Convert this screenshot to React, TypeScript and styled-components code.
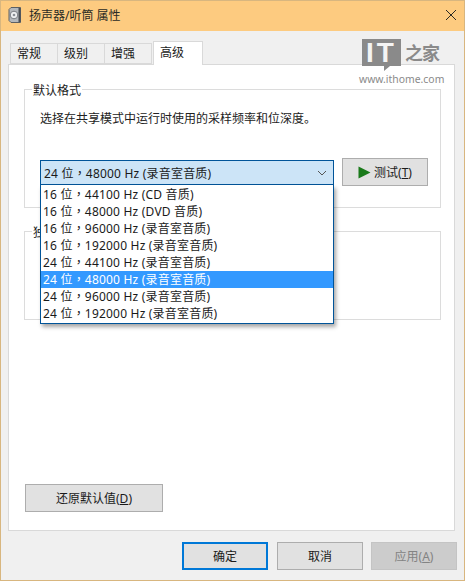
import React from "react";
import styled, { createGlobalStyle } from "styled-components";

const Global = createGlobalStyle`
  html, body { margin: 0; padding: 0; background: #f0f0f0; }
  * { box-sizing: border-box; }
`;

const Win = styled.div`
  position: relative;
  width: 465px;
  height: 581px;
  display: flex;
  flex-direction: column;
  background: #f0f0f0;
  border: 1px solid #d8b67f;
  border-top: 0;
  font-family: "Noto Sans", "Noto Sans CJK SC", sans-serif;
  font-size: 12px;
  color: #1a1a1a;
  overflow: hidden;
`;
const Title = styled.div`
  height: 31px;
  flex: none;
  background: #fdcb80;
  border-top: 1px solid #d8b67f;
  display: flex;
  align-items: center;
  padding: 0 7px 2px 7px;
  gap: 7px;
  font-size: 12px;
`;
const TitleText = styled.span`
  flex: 1;
  color: #2a2a24;
`;
const Body = styled.div`
  flex: 1;
  display: flex;
  flex-direction: column;
  padding: 10px 9px 0 7px;
  min-height: 0;
`;
const Tabs = styled.div`
  display: flex;
  height: 23px;
  flex: none;
  align-items: flex-end;
  padding-left: 3px;
`;
const Tab = styled.div<{ $active?: boolean }>`
  height: ${(p) => (p.$active ? 24 : 21)}px;
  width: ${(p) => (p.$active ? 50 : 48)}px;
  margin-bottom: ${(p) => (p.$active ? -1 : 0)}px;
  margin-left: ${(p) => (p.$active ? 1 : -1)}px;
  position: relative;
  z-index: ${(p) => (p.$active ? 2 : 1)};
  background: ${(p) => (p.$active ? "#ffffff" : "#f0f0f0")};
  border: 1px solid #d9d9d9;
  border-bottom: ${(p) => (p.$active ? "0" : "1px solid #d9d9d9")};
  display: flex;
  align-items: center;
  padding-bottom: ${(p) => (p.$active ? 4 : 1)}px;
  padding-left: 6px;
`;
const Panel = styled.div`
  flex: 1;
  height: 467px;
  background: #fff;
  border: 1px solid #d9d9d9;
  padding: 24px 13px 0 15px;
  display: flex;
  flex-direction: column;
`;
const Group = styled.div<{ $h: number; $mt?: number }>`
  position: relative;
  height: ${(p) => p.$h}px;
  margin-top: ${(p) => p.$mt ?? 0}px;
  flex: none;
  border: 1px solid #dcdcdc;
  padding: 0 13px 0 15px;
`;
const Legend = styled.span`
  position: absolute;
  left: 7px;
  top: -8px;
  background: #fff;
  padding: 0 1px;
  line-height: 17px;
`;
const Desc = styled.div`
  margin-top: 20px;
  line-height: 18px;
  color: #222;
`;
const ComboRow = styled.div`
  display: flex;
  align-items: flex-start;
  gap: 8px;
  margin-top: 30px;
`;
const ComboWrap = styled.div`
  position: relative;
  width: 294px;
  flex: none;
  margin-top: 2px;
`;
const Combo = styled.div`
  height: 25px;
  background: #cce4f7;
  border: 1px solid #005499;
  display: flex;
  align-items: center;
  justify-content: space-between;
  padding: 0 6px 0 3px;
  font-family: "Noto Sans", "Noto Sans CJK TC", sans-serif;
  letter-spacing: 0.2px;
`;
const Menu = styled.div`
  position: absolute;
  left: 0;
  right: 0;
  top: 25px;
  z-index: 5;
  background: #fff;
  border: 1px solid #005499;
  border-top: 0;
  box-shadow: 2px 3px 4px rgba(0, 0, 0, 0.35);
  padding: 1px 0;
  font-family: "Noto Sans", "Noto Sans CJK TC", sans-serif;
  letter-spacing: 0.2px;
`;
const Item = styled.div<{ $sel?: boolean }>`
  height: 17px;
  line-height: 17px;
  padding-left: 2px;
  white-space: nowrap;
  background: ${(p) => (p.$sel ? "#3399ff" : "transparent")};
  color: ${(p) => (p.$sel ? "#fff" : "#1a1a1a")};
`;
const Btn = styled.div<{ $w?: number; $primary?: boolean; $disabled?: boolean; $ml?: number }>`
  width: ${(p) => p.$w ?? 86}px;
  height: 28px;
  flex: none;
  margin-left: ${(p) => p.$ml ?? 0}px;
  display: flex;
  align-items: center;
  justify-content: center;
  gap: 3px;
  background: ${(p) => (p.$disabled ? "#cccccc" : "#e1e1e1")};
  border: ${(p) => (p.$primary ? "2px solid #0078d7" : p.$disabled ? "1px solid #c4c4c4" : "1px solid #adadad")};
  color: ${(p) => (p.$disabled ? "#838383" : "#1a1a1a")};
`;
const U = styled.span`
  text-decoration: underline;
  text-underline-offset: 1px;
`;
const Spacer = styled.div`
  flex: 1;
`;
const Restore = styled.div`
  margin: 0 0 18px 1px;
`;
const Footer = styled.div`
  flex: none;
  height: 49px;
  display: flex;
  justify-content: flex-end;
  padding: 11px 0 0 0;
  gap: 9px;
  margin-right: -2px;
`;
const Mark = styled.div`
  position: absolute;
  left: 358px;
  top: 39px;
  z-index: 3;
  width: 90px;
  display: flex;
  flex-direction: column;
  pointer-events: none;
`;
const MarkTop = styled.div`
  display: flex;
  align-items: flex-start;
  margin-left: 3px;
  gap: 4px;
`;
const MarkBox = styled.div`
  position: relative;
  width: 39px;
  height: 27px;
  margin-bottom: 5px;
  background: #8a8a8a;
  color: #f4f4f4;
  font: 700 28px/27px "Liberation Sans", sans-serif;
  letter-spacing: 3px;
  text-align: center;
  &::after {
    content: "";
    position: absolute;
    left: 22px;
    top: 27px;
    border-style: solid;
    border-width: 5px 6px 0 0;
    border-color: #8a8a8a transparent transparent transparent;
  }
`;
const MarkCn = styled.div`
  font: 700 18px/26px "Noto Sans CJK SC", sans-serif;
  color: #8a8a8a;
  white-space: nowrap;
  letter-spacing: -1px;
`;
const MarkUrl = styled.div`
  font: 10.4px/13px "Noto Sans", sans-serif;
  color: #8a8a8a;
  margin-top: 2px;
  white-space: nowrap;
`;

const Speaker = () => (
  <svg width="14" height="16" viewBox="0 0 14 16">
    <path d="M3 0.5H12.5V15.5H3L1 13.5V2.5Z" fill="#b4b8bc" stroke="#5c6064" />
    <rect x="10.5" y="1" width="2" height="14" fill="#4a4e54" />
    <circle cx="6" cy="8" r="3.8" fill="#eef0f2" stroke="#7a7e84" />
    <circle cx="6" cy="8" r="1.3" fill="#8a8e94" />
  </svg>
);

const formats = [
  "16 位，44100 Hz (CD 音质)",
  "16 位，48000 Hz (DVD 音质)",
  "16 位，96000 Hz (录音室音质)",
  "16 位，192000 Hz (录音室音质)",
  "24 位，44100 Hz (录音室音质)",
  "24 位，48000 Hz (录音室音质)",
  "24 位，96000 Hz (录音室音质)",
  "24 位，192000 Hz (录音室音质)",
];

export default function App() {
  return (
    <Win>
      <Global />
      <Title>
        <Speaker />
        <TitleText>扬声器/听筒 属性</TitleText>
        <svg width="12" height="12" viewBox="0 0 12 12">
          <path d="M1 1L11 11M11 1L1 11" stroke="#2a2a24" strokeWidth="1" fill="none" />
        </svg>
      </Title>
      <Body>
        <Tabs>
          <Tab>常规</Tab>
          <Tab>级别</Tab>
          <Tab>增强</Tab>
          <Tab $active>高级</Tab>
        </Tabs>
        <Panel>
          <Group $h={119}>
            <Legend>默认格式</Legend>
            <Desc>选择在共享模式中运行时使用的采样频率和位深度。</Desc>
            <ComboRow>
              <ComboWrap>
                <Combo>
                  <span>24 位，48000 Hz (录音室音质)</span>
                  <svg width="10" height="6" viewBox="0 0 10 6">
                    <path d="M1 1L5 5L9 1" stroke="#555" fill="none" />
                  </svg>
                </Combo>
                <Menu>
                  {formats.map((f, i) => (
                    <Item key={f} $sel={i === 5}>{f}</Item>
                  ))}
                </Menu>
              </ComboWrap>
              <Btn>
                <svg width="13" height="13" viewBox="0 0 13 13">
                  <path d="M0.5 0.5L12.5 6.5L0.5 12.5Z" fill="#1a7a1a" />
                </svg>
                <span>测试(<U>T</U>)</span>
              </Btn>
            </ComboRow>
          </Group>
          <Group $h={89} $mt={23}>
            <Legend>独占模式</Legend>
          </Group>
          <Spacer />
          <Restore>
            <Btn $w={138}><span>还原默认值(<U>D</U>)</span></Btn>
          </Restore>
        </Panel>
        <Footer>
          <Btn $primary>确定</Btn>
          <Btn>取消</Btn>
          <Btn $disabled $ml={-1}><span>应用(<U>A</U>)</span></Btn>
        </Footer>
      </Body>
      <Mark>
        <MarkTop>
          <MarkBox>IT</MarkBox>
          <MarkCn>之家</MarkCn>
        </MarkTop>
        <MarkUrl>www.ithome.com</MarkUrl>
      </Mark>
    </Win>
  );
}
